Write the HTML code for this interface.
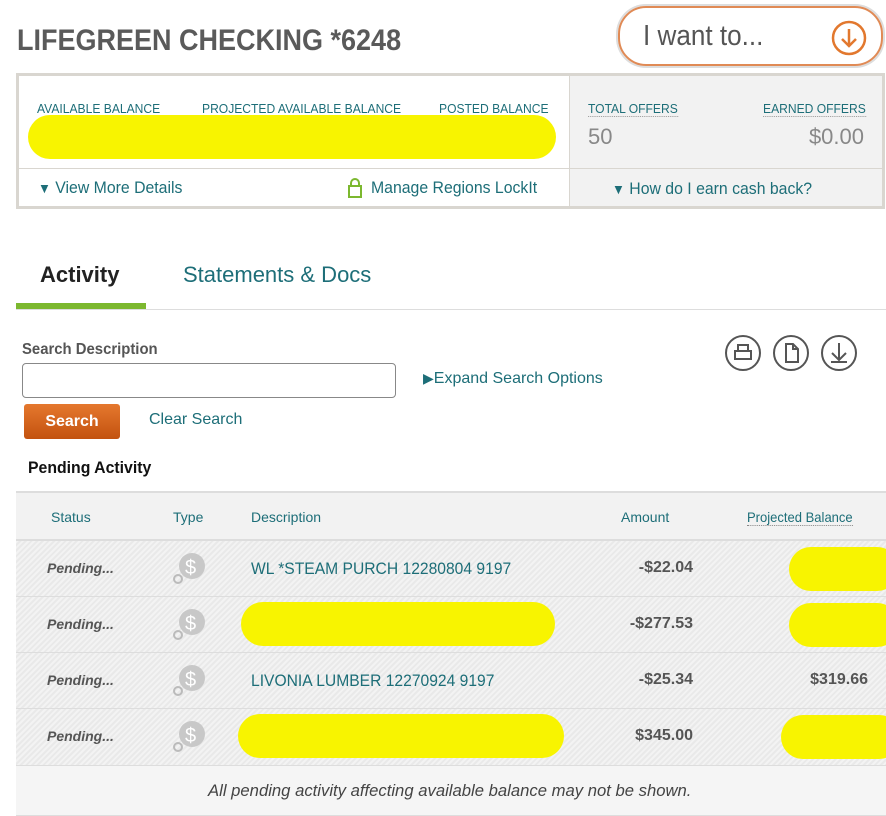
<!DOCTYPE html>
<html><head><meta charset="utf-8"><style>
*{box-sizing:border-box;margin:0;padding:0}
body{width:886px;height:816px;background:#fff;font-family:"Liberation Sans",sans-serif;position:relative;overflow:hidden;color:#555}
.a{position:absolute;white-space:nowrap;transform-origin:left top}
.n{transform:scaleX(0.93)}
.teal{color:#1d6e78}
.hl{position:absolute;background:#f8f400;border-radius:24px}
.row{position:absolute;left:16px;width:870px;height:56px;border-bottom:1px solid #ddd;background:repeating-linear-gradient(135deg,#f3f3f3 0 2px,#e9e9e9 2px 4px)}
.row .st{position:absolute;left:31px;top:19px;font-style:italic;font-weight:bold;font-size:14px;color:#555}
.row .ds{position:absolute;left:235px;top:18px;font-size:17px;color:#1d6e78;transform:scaleX(0.92);transform-origin:left top}
.row .am{position:absolute;right:193px;top:18px;font-size:16px;font-weight:bold;color:#555}
.coin{position:absolute;left:155px;top:10px;width:36px;height:36px}
</style></head><body>
<div class="a" style="left:17px;top:24px;font-size:30px;font-weight:bold;color:#5a5a5a;transform:scaleX(0.9)">LIFEGREEN CHECKING *6248</div>
<div class="a" style="left:618px;top:6px;width:265px;height:60px;border:2px solid #e08a55;border-radius:28px;box-shadow:0 0 0 2px #ddd"></div>
<div class="a" style="left:643px;top:20px;font-size:29px;color:#555;transform:scaleX(0.9)">I want to...</div>
<svg class="a" style="left:830px;top:19px" width="38" height="38" viewBox="0 0 38 38"><circle cx="19" cy="19" r="16" fill="none" stroke="#e2782e" stroke-width="2.5"/><path d="M19 10v17M12 20l7 7 7-7" fill="none" stroke="#e2782e" stroke-width="2.5"/></svg>

<div class="a" style="left:16px;top:73px;width:869px;height:136px;border:3px solid #d9d6d0;background:#fff"></div>
<div class="a" style="left:569px;top:76px;width:313px;height:130px;background:#f2f2f2;border-left:1px solid #d9d6d0"></div>
<div class="a" style="left:19px;top:168px;width:863px;height:1px;background:#d9d6d0"></div>
<div class="a teal n" style="left:37px;top:101px;font-size:13px">AVAILABLE BALANCE</div>
<div class="a teal n" style="left:202px;top:101px;font-size:13px">PROJECTED AVAILABLE BALANCE</div>
<div class="a teal n" style="left:439px;top:101px;font-size:13px">POSTED BALANCE</div>
<div class="hl" style="left:28px;top:115px;width:528px;height:44px"></div>
<div class="a teal n" style="left:588px;top:101px;font-size:13px;border-bottom:1px dotted #999">TOTAL OFFERS</div>
<div class="a teal n" style="left:763px;top:101px;font-size:13px;border-bottom:1px dotted #999">EARNED OFFERS</div>
<div class="a" style="left:588px;top:124px;font-size:22px;color:#888">50</div>
<div class="a" style="right:22px;top:124px;font-size:22px;color:#888">$0.00</div>
<div class="a teal n" style="left:38px;top:178px;font-size:17px"><span style="font-size:14px">▼</span> View More Details</div>
<svg class="a" style="left:347px;top:177px" width="16" height="22" viewBox="0 0 16 22"><path d="M4 9V6a4 4 0 018 0v3" fill="none" stroke="#7cb82f" stroke-width="2"/><rect x="2" y="9" width="12" height="11" fill="none" stroke="#7cb82f" stroke-width="2"/></svg>
<div class="a teal n" style="left:371px;top:178px;font-size:17px">Manage Regions LockIt</div>
<div class="a teal n" style="left:612px;top:179px;font-size:17px"><span style="font-size:14px">▼</span> How do I earn cash back?</div>

<div class="a" style="left:40px;top:262px;font-size:22px;font-weight:bold;color:#222">Activity</div>
<div class="a teal" style="left:183px;top:262px;font-size:22px">Statements &amp; Docs</div>
<div class="a" style="left:16px;top:303px;width:130px;height:6px;background:#7cb82f"></div>
<div class="a" style="left:16px;top:309px;width:870px;height:1px;background:#ddd"></div>

<div class="a n" style="left:22px;top:341px;font-size:16px;font-weight:bold;color:#555">Search Description</div>
<div class="a" style="left:22px;top:363px;width:374px;height:35px;border:1px solid #888;border-radius:4px"></div>
<div class="a teal" style="left:423px;top:370px;font-size:16px"><span style="font-size:14px">▶</span>Expand Search Options</div>
<div class="a" style="left:24px;top:404px;width:96px;height:35px;background:linear-gradient(#e5782e,#c3520f);border-radius:3px;color:#fff;font-weight:bold;font-size:16px;text-align:center;line-height:35px">Search</div>
<div class="a teal" style="left:149px;top:411px;font-size:16px">Clear Search</div>
<svg class="a" style="left:724px;top:334px" width="136" height="38" viewBox="0 0 136 38"><g fill="none" stroke="#555" stroke-width="2"><circle cx="19" cy="19" r="17"/><path d="M14 17v-6h10v6M11 17h16v8H11z"/><circle cx="67" cy="19" r="17"/><path d="M62 10h7l5 5v13H62zM69 10v5h5"/><circle cx="115" cy="19" r="17"/><path d="M115 9v17M108 19l7 7 7-7M107 28h16"/></g></svg>
<div class="a n" style="left:28px;top:458px;font-size:17px;font-weight:bold;color:#111">Pending Activity</div>

<div class="a" style="left:16px;top:491px;width:870px;height:50px;background:#f2f2f2;border-top:2px solid #ddd;border-bottom:2px solid #ddd"></div>
<div class="a teal" style="left:51px;top:509px;font-size:14px">Status</div>
<div class="a teal" style="left:173px;top:509px;font-size:14px">Type</div>
<div class="a teal" style="left:251px;top:509px;font-size:14px">Description</div>
<div class="a teal" style="left:621px;top:509px;font-size:14px">Amount</div>
<div class="a teal n" style="left:747px;top:509px;font-size:14px;border-bottom:1px dotted #888">Projected Balance</div>

<div class="row" style="top:541px"><div class="st">Pending...</div><svg class="coin"><circle cx="21" cy="15" r="13" fill="#c8c8c8"/><text x="14" y="23" font-size="20" fill="#fff" font-family="Liberation Sans">$</text><circle cx="7" cy="28" r="4" fill="none" stroke="#bbb" stroke-width="2"/></svg><div class="ds">WL *STEAM PURCH 12280804 9197</div><div class="am">-$22.04</div><div class="hl" style="left:773px;top:6px;width:110px;height:44px"></div></div>
<div class="row" style="top:597px"><div class="st">Pending...</div><svg class="coin"><circle cx="21" cy="15" r="13" fill="#c8c8c8"/><text x="14" y="23" font-size="20" fill="#fff" font-family="Liberation Sans">$</text><circle cx="7" cy="28" r="4" fill="none" stroke="#bbb" stroke-width="2"/></svg><div class="hl" style="left:225px;top:5px;width:314px;height:44px"></div><div class="am">-$277.53</div><div class="hl" style="left:773px;top:6px;width:110px;height:44px"></div></div>
<div class="row" style="top:653px"><div class="st">Pending...</div><svg class="coin"><circle cx="21" cy="15" r="13" fill="#c8c8c8"/><text x="14" y="23" font-size="20" fill="#fff" font-family="Liberation Sans">$</text><circle cx="7" cy="28" r="4" fill="none" stroke="#bbb" stroke-width="2"/></svg><div class="ds">LIVONIA LUMBER 12270924 9197</div><div class="am">-$25.34</div><div class="am" style="right:18px">$319.66</div></div>
<div class="row" style="top:709px;height:57px"><div class="st">Pending...</div><svg class="coin"><circle cx="21" cy="15" r="13" fill="#c8c8c8"/><text x="14" y="23" font-size="20" fill="#fff" font-family="Liberation Sans">$</text><circle cx="7" cy="28" r="4" fill="none" stroke="#bbb" stroke-width="2"/></svg><div class="hl" style="left:222px;top:5px;width:326px;height:44px"></div><div class="am">$345.00</div><div class="hl" style="left:765px;top:6px;width:120px;height:44px"></div></div>
<div class="a" style="left:16px;top:766px;width:870px;height:50px;background:#f5f5f5;border-bottom:1px solid #ddd"></div>
<div class="a" style="left:208px;top:781px;font-size:17px;font-style:italic;color:#444;transform:scaleX(0.98)">All pending activity affecting available balance may not be shown.</div>
</body></html>
